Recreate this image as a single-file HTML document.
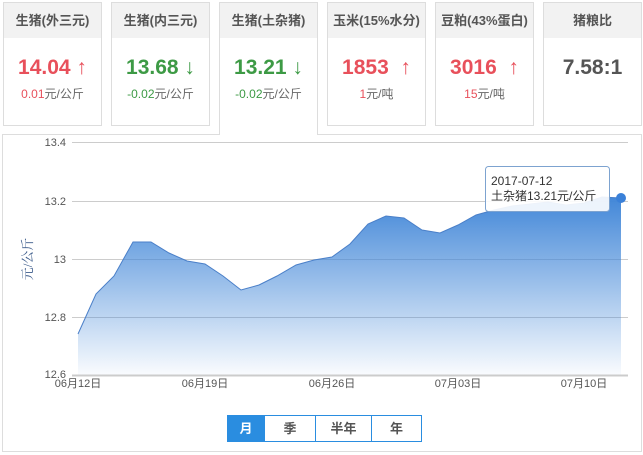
<!DOCTYPE html><html><head><meta charset="utf-8"><style>
body{margin:0;width:643px;height:455px;background:#fff;font-family:"Liberation Sans","Noto Sans CJK SC",sans-serif;position:relative;overflow:hidden}
.c{position:absolute;top:2px;width:97px;height:122px;border:1px solid #ddd;background:#fff;text-align:center}
.c .h{height:35px;background:#f2f2f2;line-height:35px;font-size:13px;font-weight:bold;color:#555}
.c .v{margin-top:16px;font-size:21px;font-weight:bold;line-height:28px}
.c .s{font-size:12px;color:#666;margin-top:3px}
.r{color:#e8505b}.g{color:#3d9a45}
.act{height:132px;border-bottom:none;z-index:2}
.panel{position:absolute;left:2px;top:134px;width:638px;height:316px;border:1px solid #ddd}
.btns{position:absolute;left:227px;top:415px;height:25px;display:flex;border:1px solid #2a8de0}
.btns div{font-size:13px;font-weight:bold;color:#555;line-height:25px;text-align:center;border-left:1px solid #2a8de0}
</style></head><body>
<div class="c" style="left:3px"><div class="h">生猪(外三元)</div><div class="v r">14.04 ↑</div><div class="s"><span class="r">0.01</span>元/公斤</div></div>
<div class="c" style="left:111px"><div class="h">生猪(内三元)</div><div class="v g">13.68 ↓</div><div class="s"><span class="g">-0.02</span>元/公斤</div></div>
<div class="c act" style="left:219px"><div class="h">生猪(土杂猪)</div><div class="v g">13.21 ↓</div><div class="s"><span class="g">-0.02</span>元/公斤</div></div>
<div class="c" style="left:327px"><div class="h">玉米(15%水分)</div><div class="v r">1853 &nbsp;↑</div><div class="s"><span class="r">1</span>元/吨</div></div>
<div class="c" style="left:435px"><div class="h">豆粕(43%蛋白)</div><div class="v r">3016 &nbsp;↑</div><div class="s"><span class="r">15</span>元/吨</div></div>
<div class="c" style="left:543px"><div class="h">猪粮比</div><div class="v" style="color:#555">7.58:1</div></div>
<div class="panel"></div>
<svg width="643" height="455" style="position:absolute;left:0;top:0">
<defs><linearGradient id="gr" x1="0" y1="0" x2="0" y2="1"><stop offset="0" stop-color="#4287d8"/><stop offset="1" stop-color="#4287d8" stop-opacity="0.03"/></linearGradient></defs>
<g stroke="#ccc" stroke-width="1"><line x1="72" y1="142.5" x2="628" y2="142.5"/><line x1="72" y1="201.5" x2="628" y2="201.5"/><line x1="72" y1="259.5" x2="628" y2="259.5"/><line x1="72" y1="317.5" x2="628" y2="317.5"/></g>
<path d="M78,334L96,294L114,276L133,242L151,242L169,253L187,261L205,264L223,276L241,290L259,285L277,276L296,265L314,260L332,257L350,244L368,224L386,216L404,218L422,230L440,233L458,225L476,215L494,210L512,206L530,204L548,202L566,205L584,203L602,197L621,198L621,375L78,375Z" fill="url(#gr)"/>
<path d="M78,334L96,294L114,276L133,242L151,242L169,253L187,261L205,264L223,276L241,290L259,285L277,276L296,265L314,260L332,257L350,244L368,224L386,216L404,218L422,230L440,233L458,225L476,215L494,210L512,206L530,204L548,202L566,205L584,203L602,197L621,198" fill="none" stroke="#4a7fc8" stroke-width="1"/>
<line x1="72" y1="375.5" x2="628" y2="375.5" stroke="#ccc" stroke-width="2"/>
<circle cx="621" cy="198" r="5" fill="#3a80d8"/>
<g font-size="11" fill="#555" text-anchor="end" font-family="Liberation Sans,sans-serif"><text x="66" y="146">13.4</text><text x="66" y="205">13.2</text><text x="66" y="263">13</text><text x="66" y="321">12.8</text><text x="66" y="378">12.6</text></g>
<g font-size="11" fill="#555" text-anchor="middle"><text x="78" y="387">06月12日</text><text x="205" y="387">06月19日</text><text x="332" y="387">06月26日</text><text x="458" y="387">07月03日</text><text x="584" y="387">07月10日</text></g>
<text transform="translate(32,259) rotate(-90)" font-size="13" fill="#3a5a8a" text-anchor="middle" font-family="Liberation Serif,Noto Serif CJK SC,serif">元/公斤</text>
<rect x="485.5" y="166.5" width="124" height="45" rx="3" fill="#fff" fill-opacity="0.9" stroke="#7da3d0"/>
<text x="491" y="185" font-size="12" fill="#333">2017-07-12</text>
<text x="491" y="200" font-size="12" fill="#333">土杂猪13.21元/公斤</text>
</svg>
<div class="btns"><div style="width:36px;background:#2a8de0;color:#fff;border-left:none">月</div><div style="width:50px">季</div><div style="width:55px">半年</div><div style="width:49px">年</div></div>
</body></html>
